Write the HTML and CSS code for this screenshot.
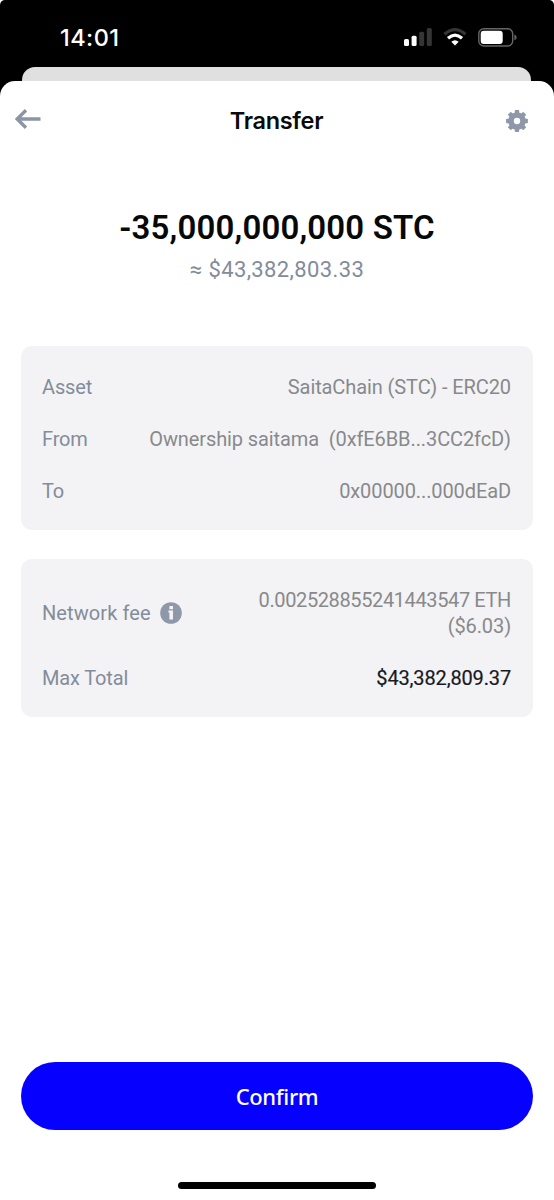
FILE: index.html
```html
<!DOCTYPE html>
<html lang="en">
<head>
<meta charset="utf-8">
<title>Transfer</title>
<link rel="stylesheet" href="styles.css">
</head>
<body>
<div class="phone">
  <div class="status">
    <span class="time">14:01</span>
    <div class="indicators">
      <svg class="signal" width="28" height="18" viewBox="0 0 28 18"><g fill="#fff"><rect x="0" y="11" width="5" height="7" rx="1.5"/><rect x="7.6" y="7.7" width="5" height="10.3" rx="1.5"/></g><g fill="#353535"><rect x="15.2" y="3.7" width="5" height="14.3" rx="1.5"/><rect x="22.8" y="0" width="5" height="18" rx="1.5"/></g></svg>
      <svg class="wifi" width="24" height="18" viewBox="0 0 24 18"><g fill="none" stroke-width="3.2"><path d="M1.5 6.3Q12-3 22.5 6.3" stroke="#353535"/><path d="M5 10.3Q12 4 19 10.3" stroke="#fff"/></g><path d="M8.3 13.7Q12 10.6 15.7 13.7L12 17.6Z" fill="#fff"/></svg>
      <svg class="battery" width="40" height="19" viewBox="0 0 40 19"><rect x=".8" y=".8" width="33.9" height="17.2" rx="5" fill="none" stroke="#666" stroke-width="1.4"/><rect x="2.7" y="2.8" width="22" height="13.2" rx="3" fill="#fff"/><path d="M36.4 6.5Q38.6 7.2 38.6 9.4T36.4 12.3Z" fill="#666"/></svg>
    </div>
  </div>
  <div class="sheet-behind"></div>
  <main class="sheet">
    <header class="nav">
      <svg class="back" width="26" height="20" viewBox="0 0 26 20"><path d="M11 1.3L2.2 10L11 18.7M2 10H25.5" fill="none" stroke="#8c95a5" stroke-width="3.4"/></svg>
      <h1 class="title">Transfer</h1>
      <svg class="gear" width="22" height="22" viewBox="0 0 22 22"><g fill="#8f98a8"><path fill-rule="evenodd" d="M11 2.2a8.8 8.8 0 1 0 0 17.6a8.8 8.8 0 0 0 0-17.6ZM11 7.8a3.2 3.2 0 1 1 0 6.4a3.2 3.2 0 0 1 0-6.4Z"/><g id="teeth"><rect x="8.8" y="0.1" width="4.4" height="4" rx=".7"/><rect x="8.8" y="17.9" width="4.4" height="4" rx=".7"/><rect x=".1" y="8.8" width="4" height="4.4" rx=".7"/><rect x="17.9" y="8.8" width="4" height="4.4" rx=".7"/></g><use href="#teeth" transform="rotate(45 11 11)"/></g></svg>
    </header>
    <section class="summary">
      <div class="amount"><span>-35,000,000,000 STC</span></div>
      <div class="fiat"><span>≈ $43,382,803.33</span></div>
    </section>
    <section class="card">
      <div class="row"><span class="label">Asset</span><span class="value">SaitaChain (STC) - ERC20</span></div>
      <div class="row"><span class="label">From</span><span class="value">Ownership saitama&nbsp; (0xfE6BB...3CC2fcD)</span></div>
      <div class="row"><span class="label">To</span><span class="value">0x00000...000dEaD</span></div>
    </section>
    <section class="card fees">
      <div class="row fee"><span class="label network">Network fee</span><svg class="info" width="22" height="22" viewBox="0 0 22 22"><circle cx="11" cy="11" r="10.8" fill="#8f98a8"/><path d="M9.4 4h3.6v3.2H9.4ZM8.4 8.6H13v9H9.4v-7.2H8.4Z" fill="#f3f3f5"/></svg><span class="value"><span class="eth">0.002528855241443547 ETH</span><br><span>($6.03)</span></span></div>
      <div class="row total"><span class="label max">Max Total</span><span class="value v-total">$43,382,809.37</span></div>
    </section>
    <button class="confirm">Confirm</button>
    <div class="home"></div>
  </main>
</div>
</body>
</html>
```
FILE: styles.css
```css
* { box-sizing: border-box; }
body { margin: 0; background: #fff; }
svg { display: block; flex: none; }
.phone { width: 554px; height: 1200px; background: #000; border-radius: 5px 5px 0 0; display: flex; flex-direction: column; font-family: Roboto, "Liberation Sans", sans-serif; overflow: hidden; }
.status { height: 67px; padding: 23px 36px 0 60px; display: flex; justify-content: space-between; }
.time { font: 500 23.5px/29px Inter, sans-serif; color: #fff; letter-spacing: .45px; }
.indicators { display: flex; padding-top: 5px; }
.wifi { margin: 0 11px; }
.sheet-behind { height: 14px; margin: 0 23px 0 22px; background: #e0e0e0; border-radius: 13px 13px 0 0; }
.sheet { flex: 1; background: #fff; border-radius: 15px 15px 0 0; padding: 0 21px; display: flex; flex-direction: column; }
.nav { height: 80px; margin: 0 -6px; display: flex; align-items: center; justify-content: space-between; }
.back { margin-top: -4px; }
.title { margin: 0 0 0 6px; font: 600 23.5px/30px Inter, sans-serif; letter-spacing: -.3px; color: #090a0a; }
.gear { margin-right: 11px; }
.summary { height: 185px; padding-top: 45px; text-align: center; }
.amount { font-weight: 600; font-size: 33px; line-height: 43px; letter-spacing: .15px; color: #070808; }
.fiat { font-size: 22px; line-height: 28px; margin-top: 7px; letter-spacing: .38px; color: #838c9b; }
.card { height: 184px; margin-right: .5px; border-radius: 11px; background: #f3f3f5; padding: 28px 21.5px 0 21px; }
.row { display: flex; justify-content: space-between; height: 26px; margin-bottom: 26.2px; line-height: 26px; font-size: 20px; white-space: nowrap; }
.label { color: #838c9b; letter-spacing: -.15px; }
.network { letter-spacing: .1px; }
.value { color: #88898b; text-align: right; letter-spacing: -.1px; }
.eth { letter-spacing: -.38px; }
.fees { height: 158px; margin-top: 29px; }
.fee { height: 52px; align-items: center; margin-bottom: 26px; }
.info { margin-left: 9px; margin-right: auto; }
.total { margin-bottom: 0; }
.v-total { color: #171a24; font-weight: 400; letter-spacing: -.15px; -webkit-text-stroke: .2px #171a24; }
.confirm { margin-top: 345px; height: 68px; flex: none; border: 0; border-radius: 34px; background: #0500ff; color: #fff; font: 500 22px/30px "Noto Sans", sans-serif; letter-spacing: -.35px; }
.home { width: 198px; height: 7px; margin: 52px 0 0 157px; border-radius: 4px; background: #000; }
```
